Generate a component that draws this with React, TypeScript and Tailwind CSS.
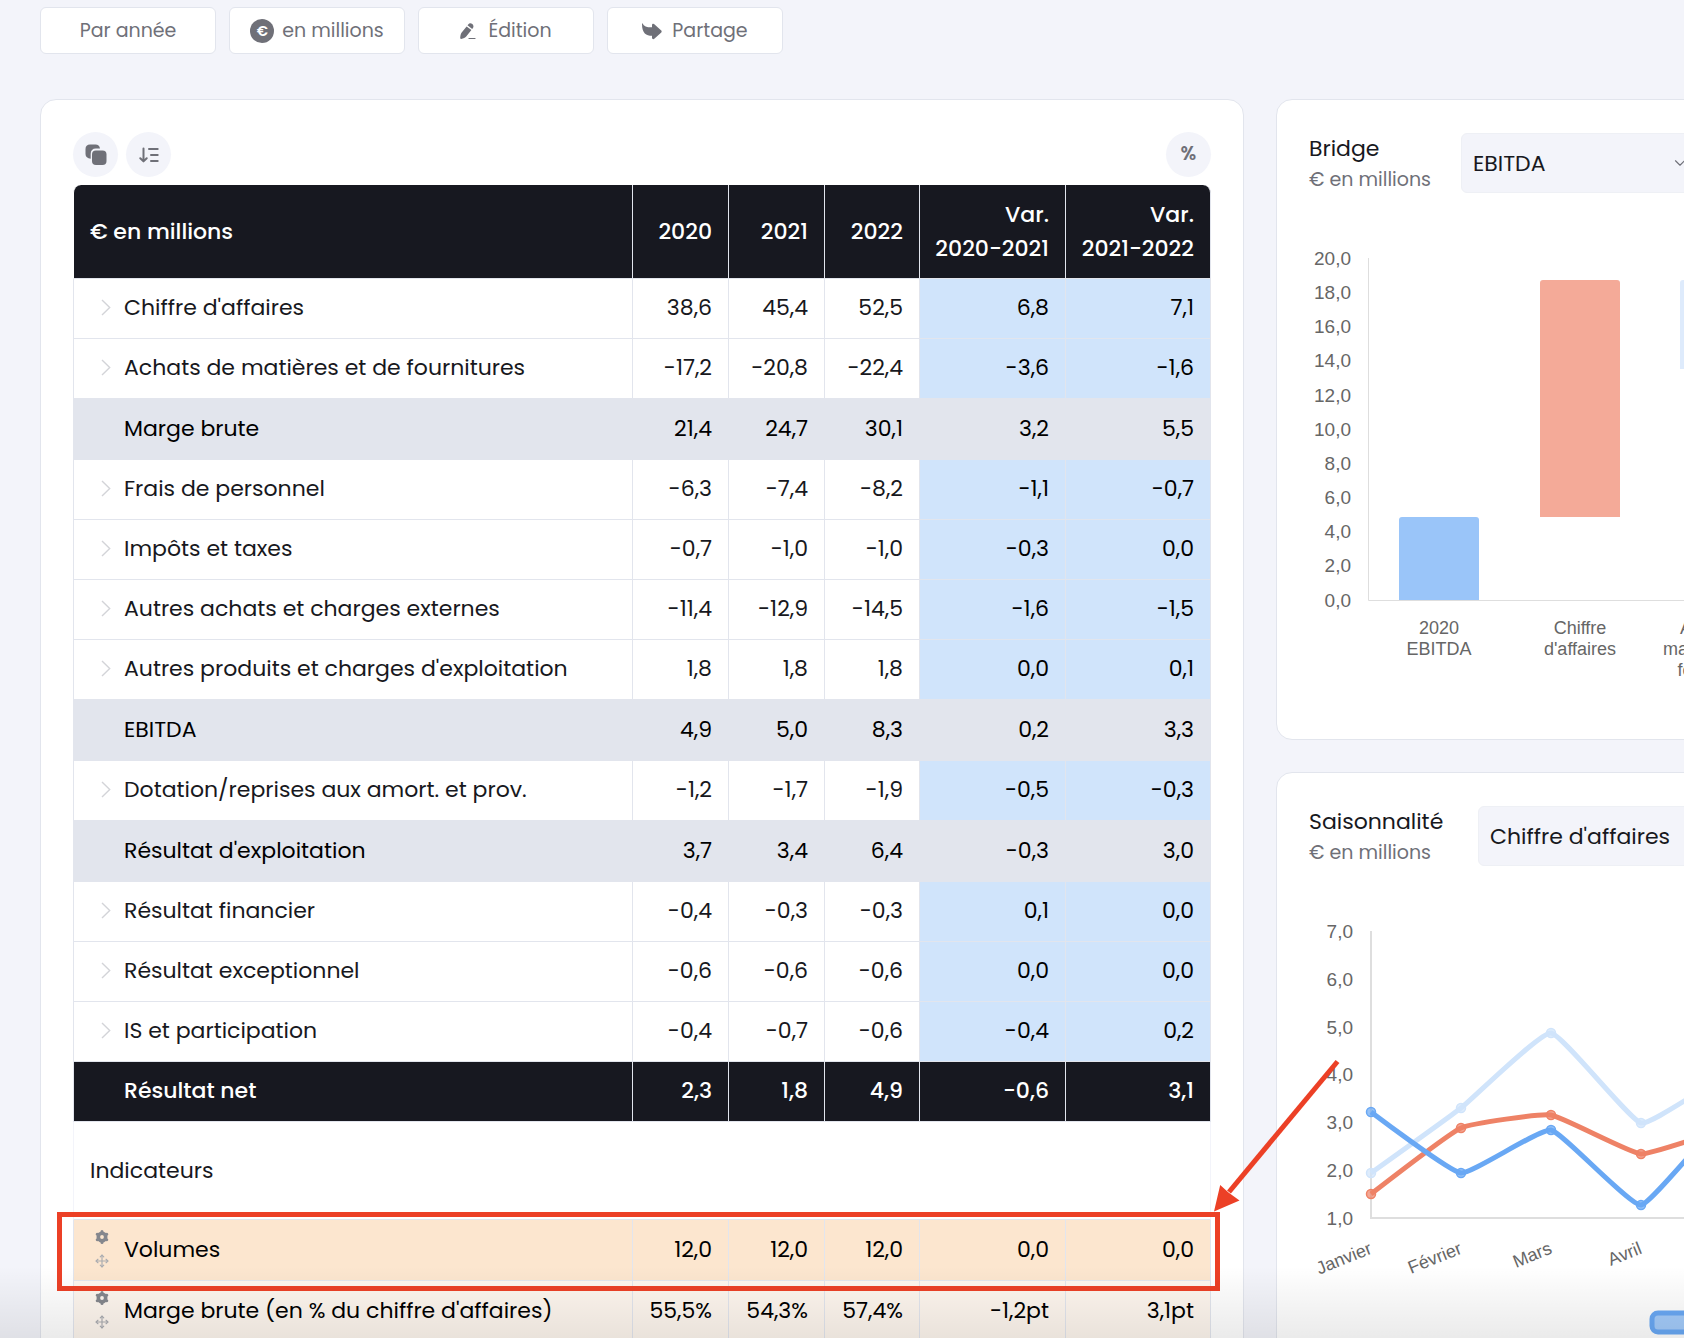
import { ChevronDown, Move } from "lucide-react";
import clsx from "clsx";

type RowKind = "line" | "subtotal" | "total" | "indicator";

interface Row {
  label: string;
  values: string[];
  kind: RowKind;
  highlighted?: boolean;
}

const columns = ["2020", "2021", "2022", "Var. 2020-2021", "Var. 2021-2022"];

const rows: Row[] = [
  { kind: "line", label: "Chiffre d'affaires", values: ["38,6", "45,4", "52,5", "6,8", "7,1"] },
  { kind: "line", label: "Achats de matières et de fournitures", values: ["-17,2", "-20,8", "-22,4", "-3,6", "-1,6"] },
  { kind: "subtotal", label: "Marge brute", values: ["21,4", "24,7", "30,1", "3,2", "5,5"] },
  { kind: "line", label: "Frais de personnel", values: ["-6,3", "-7,4", "-8,2", "-1,1", "-0,7"] },
  { kind: "line", label: "Impôts et taxes", values: ["-0,7", "-1,0", "-1,0", "-0,3", "0,0"] },
  { kind: "line", label: "Autres achats et charges externes", values: ["-11,4", "-12,9", "-14,5", "-1,6", "-1,5"] },
  { kind: "line", label: "Autres produits et charges d'exploitation", values: ["1,8", "1,8", "1,8", "0,0", "0,1"] },
  { kind: "subtotal", label: "EBITDA", values: ["4,9", "5,0", "8,3", "0,2", "3,3"] },
  { kind: "line", label: "Dotation/reprises aux amort. et prov.", values: ["-1,2", "-1,7", "-1,9", "-0,5", "-0,3"] },
  { kind: "subtotal", label: "Résultat d'exploitation", values: ["3,7", "3,4", "6,4", "-0,3", "3,0"] },
  { kind: "line", label: "Résultat financier", values: ["-0,4", "-0,3", "-0,3", "0,1", "0,0"] },
  { kind: "line", label: "Résultat exceptionnel", values: ["-0,6", "-0,6", "-0,6", "0,0", "0,0"] },
  { kind: "line", label: "IS et participation", values: ["-0,4", "-0,7", "-0,6", "-0,4", "0,2"] },
  { kind: "total", label: "Résultat net", values: ["2,3", "1,8", "4,9", "-0,6", "3,1"] },
];

const indicators: Row[] = [
  { kind: "indicator", label: "Volumes", values: ["12,0", "12,0", "12,0", "0,0", "0,0"], highlighted: true },
  { kind: "indicator", label: "Marge brute (en % du chiffre d'affaires)", values: ["55,5%", "54,3%", "57,4%", "-1,2pt", "3,1pt"] },
];

/* Icons */

function PencilIcon() {
  return (
    <svg width="16" height="17" viewBox="0 0 16 17" fill="currentColor" aria-hidden="true">
      <path d="M6.6 3.4 11.4 7.1 6.2 13.6C5.4 14.6 3.4 15.8 1.2 16 .6 16 .2 15.7.2 15.1.3 12.9.7 10.8 1.5 9.8Z" />
      <path d="M7.5 2.3 8.2 1.4C9.4-.1 11.1.1 12.3 1.1 13.5 2 13.9 3.7 12.9 5.1L12.2 6Z" />
      <path d="M9 15.500H15" stroke="currentColor" strokeWidth="1.200" strokeLinecap="round" />
    </svg>
  );
}

function ShareIcon() {
  return (
    <svg width="20" height="17" viewBox="0 0 20 17" fill="currentColor" aria-hidden="true">
      <path d="M.6.4C1.8 3.3 4.8 4.4 10 4.3V2.3C10 .8 11.5.4 12.6 1.4L19 7.3C19.9 8.1 19.9 9 19 9.8L12.6 15.6C11.5 16.6 10 16.2 10 14.7V12.8C4.200 12.800 0 10.200 0 .9 0 .2.400 0 .6.4Z" />
    </svg>
  );
}

function CopyIcon() {
  return (
    <svg width="22" height="22" viewBox="0 0 22 22" fill="currentColor" aria-hidden="true">
      <path d="M5 .5H10.500C13 .5 14.700 2 15 4.600H11C7.500 4.600 5.700 6.500 5.700 10V14.700C2.500 14.500.5 12.800.5 10V5C.5 2.200 2.200.5 5 .5Z" />
      <rect x="7" y="6.500" width="14.500" height="14.500" rx="4" />
    </svg>
  );
}

function SortIcon() {
  return (
    <svg width="20" height="16" viewBox="0 0 20 16" fill="none" stroke="currentColor" strokeWidth="2" strokeLinecap="round" strokeLinejoin="round" aria-hidden="true">
      <path d="M4.500 1.500V14M1.300 11.200 4.500 14.400 7.700 11.200M10 2H18.700M12 8H18.700M12 14H18.700" />
    </svg>
  );
}

function ExpandIcon() {
  return (
    <svg width="10" height="17" viewBox="0 0 10 17" fill="none" stroke="currentColor" strokeWidth="1.400" aria-hidden="true">
      <path d="M1 1 8.700 8.500 1 16" />
    </svg>
  );
}

function GearIcon() {
  return (
    <svg width="14" height="14" viewBox="0 0 14 14" fill="none" stroke="currentColor" aria-hidden="true">
      <circle cx="7" cy="7" r="3.700" strokeWidth="3.600" />
      {[0, 60, 120].map((angle) => (
        <path key={angle} d="M7 1.500V2.500M7 11.500V12.500" strokeWidth="3" strokeLinecap="round" transform={`rotate(${angle} 7 7)`} />
      ))}
    </svg>
  );
}

/* Income statement */

function ToolbarButton({ children }: { children: React.ReactNode }) {
  return (
    <button
      type="button"
      className="flex h-[47px] w-[176px] items-center justify-center gap-2 rounded-md border border-[#e2e5ed] bg-white pt-px text-[19px] text-[#6f7078]"
    >
      {children}
    </button>
  );
}

function RoundButton({ label, children }: { label: string; children: React.ReactNode }) {
  return (
    <button
      type="button"
      aria-label={label}
      className="flex size-[45px] items-center justify-center rounded-full bg-[#f3f4fa] text-[19px] font-semibold text-[#6f7078]"
    >
      {children}
    </button>
  );
}

/* Frame and arrow drawn around a row */
function Callout() {
  return (
    <>
      <span className="pointer-events-none absolute -top-2 -right-[9px] -bottom-[10px] -left-4 border-[5px] border-[#ec4026]" />
      <svg
        className="pointer-events-none absolute bottom-full left-full mb-2"
        width="130"
        height="154"
        viewBox="0 0 130 154"
        aria-hidden="true"
      >
        <path d="M126.500 3.500 18 134" stroke="#ec4026" strokeWidth="5" />
        <path d="M3 153.500 9.200 127 17.500 134.500 28.500 142.500Z" fill="#ec4026" />
      </svg>
    </>
  );
}

function StatementRow({ row }: { row: Row }) {
  const { kind, label, values, highlighted } = row;
  return (
    <tr
      className={clsx(
        kind === "line" && "h-[60px] text-[#171820]",
        kind === "subtotal" && "h-[61px] bg-[#e2e5ed] text-black",
        kind === "total" && "h-[60px] bg-[#171820] text-white",
        kind === "indicator" && "h-[61px] text-black",
        kind === "indicator" && (highlighted ? "relative z-10 bg-[#fce6cf]" : "bg-[#fef6ee]"),
      )}
    >
      <th
        scope="row"
        className={clsx(
          "border-x border-b border-[#e2e5ed] pb-0.5 text-left",
          kind === "total" ? "font-medium" : "font-normal",
        )}
      >
        <div className="flex items-center">
          <div className="flex w-[50px] shrink-0 items-center pl-[21px]">
            {kind === "line" && (
              <button type="button" aria-label={`Déplier ${label}`} className="pl-1.5 text-[#d3d4d8]">
                <ExpandIcon />
              </button>
            )}
            {kind === "indicator" && (
              <div className="flex flex-col gap-[10px]">
                <button type="button" aria-label={`Paramètres ${label}`} className="text-[#85878d]">
                  <GearIcon />
                </button>
                <button type="button" aria-label={`Déplacer ${label}`} className="text-[#a9abb0]">
                  <Move size={14} strokeWidth={2} />
                </button>
              </div>
            )}
          </div>
          <span className="whitespace-nowrap">{label}</span>
        </div>
        {highlighted && <Callout />}
      </th>
      {values.map((value, i) => (
        <td
          key={columns[i]}
          className={clsx(
            "border-r border-b border-[#e2e5ed] pr-4 pb-0.5 text-right whitespace-nowrap",
            kind === "total" && "font-medium",
            kind === "line" && i > 2 && "bg-[#d0e4fb] text-black",
          )}
        >
          {value}
        </td>
      ))}
    </tr>
  );
}

function StatementTable() {
  return (
    <table className="mt-2 w-full table-fixed border-separate border-spacing-0 text-[22px]">
      <colgroup>
        <col />
        <col className="w-[96px]" />
        <col className="w-[96px]" />
        <col className="w-[95px]" />
        <col className="w-[146px]" />
        <col className="w-[145px]" />
      </colgroup>
      <thead>
        <tr className="h-[94px] leading-[34px] text-white">
          <th scope="col" className="rounded-tl-lg border-x border-b border-[#e2e5ed] border-l-white bg-[#171820] pl-4 text-left font-medium">
            € en millions
          </th>
          {columns.map((column) => (
            <th
              key={column}
              scope="col"
              className="border-r border-b border-[#e2e5ed] bg-[#171820] pr-4 text-right font-medium last:rounded-tr-lg"
            >
              {column.split(" ").map((part) => (
                <span key={part} className="block whitespace-nowrap">{part}</span>
              ))}
            </th>
          ))}
        </tr>
      </thead>
      <tbody>
        {rows.map((row) => (
          <StatementRow key={row.label} row={row} />
        ))}
        <tr className="h-[98px] text-[#171820]">
          <th scope="rowgroup" colSpan={6} className="border-x border-b border-[#f3f4fa] border-b-[#e2e5ed] pl-4 text-left font-normal">
            Indicateurs
          </th>
        </tr>
        {indicators.map((row) => (
          <StatementRow key={row.label} row={row} />
        ))}
      </tbody>
    </table>
  );
}

/* Charts */

interface ChartCardProps {
  id: string;
  title: string;
  option: string;
  titleClass: string;
  selectClass: string;
  children: React.ReactNode;
}

function ChartCard({ id, title, option, titleClass, selectClass, children }: ChartCardProps) {
  return (
    <section className="rounded-2xl border border-[#e2e5ed] bg-white p-8">
      <div className="flex items-center">
        <div className={clsx("shrink-0 whitespace-nowrap", titleClass)}>
          <h2 className="text-[22px] leading-[34px] text-[#171820]">{title}</h2>
          <p className="text-[19px] leading-[28px] text-[#6f7078]">€ en millions</p>
        </div>
        <div className={clsx("relative shrink-0", selectClass)}>
          <select
            id={id}
            aria-label={title}
            className="h-[60px] w-full appearance-none rounded-md border border-[#eef0f5] bg-[#f3f4fa] pl-[11px] text-[22px] text-[#171820]"
          >
            <option>{option}</option>
          </select>
          <ChevronDown size={18} strokeWidth={1.5} className="pointer-events-none absolute top-[21px] right-3 text-[#6f7078]" />
        </div>
      </div>
      {children}
    </section>
  );
}

const bars = [
  { x: 90, y: 292, height: 83, color: "#9ac5f9", label: ["2020", "EBITDA"] },
  { x: 231, y: 55, height: 237, color: "#f4aa98", label: ["Chiffre", "d'affaires"] },
  { x: 371, y: 55, height: 89, color: "#deebfc", label: ["Achats de", "matières et de", "fournitures"] },
];

const chartClass = "block font-['Liberation_Sans',Arial,sans-serif]";

function BridgeChart() {
  const ticks = Array.from({ length: 11 }, (_, i) => 20 - i * 2);
  return (
    <svg className={clsx("mt-[31px]", chartClass)} width="680" height="482" viewBox="0 0 680 482" fill="#666" role="img" aria-label="Bridge EBITDA">
      {ticks.map((tick, i) => (
        <text key={tick} x="42" y={40 + i * 34.15} textAnchor="end" fontSize="19">
          {tick},0
        </text>
      ))}
      <path d="M59.500 33V375.500H680" fill="none" stroke="#dedede" />
      {bars.map((bar) => (
        <g key={bar.x}>
          <path
            d={`M${bar.x} ${bar.y + bar.height}v${-(bar.height - 3)}q0-3 3-3h74q3 0 3 3v${bar.height - 3}z`}
            fill={bar.color}
          />
          {bar.label.map((line, i) => (
            <text key={line} x={bar.x + 40} y={409 + i * 21} textAnchor="middle" fontSize="18">
              {line}
            </text>
          ))}
        </g>
      ))}
    </svg>
  );
}

const months = ["Janvier", "Février", "Mars", "Avril"];
const monthX = [62, 152, 242, 332, 422];

const series = [
  { color: "#d0e4fb", points: [276, 211, 136, 226, 178] },
  { color: "#ee8266", points: [297, 231, 218, 257, 232] },
  { color: "#69a8f4", points: [215, 276, 233, 308, 218] },
];

function curve(ys: number[]) {
  const tension = 0.06;
  const slope = (i: number) => {
    if (i === 0 || i === ys.length - 1) return 0;
    return (ys[i + 1] - ys[i - 1]) * tension;
  };
  const dx = 180 * tension;
  return ys.reduce((path, y, i) => {
    if (i === 0) return `M${monthX[0]} ${y}`;
    // The first point has no handle of its own
    const x1 = i === 1 ? monthX[0] : monthX[i - 1] + dx;
    return `${path}C${x1} ${ys[i - 1] + slope(i - 1)} ${monthX[i] - dx} ${y - slope(i)} ${monthX[i]} ${y}`;
  }, "");
}

function SeasonalityChart() {
  return (
    <svg className={clsx("mt-[30px]", chartClass)} width="680" height="482" viewBox="0 0 680 482" fill="#666" role="img" aria-label="Saisonnalité du chiffre d'affaires">
      {[7, 6, 5, 4, 3, 2, 1].map((tick, i) => (
        <text key={tick} x="44" y={41 + i * 47.8} textAnchor="end" fontSize="19">
          {tick},0
        </text>
      ))}
      <path d="M62 34V321H680" fill="none" stroke="#dedede" strokeWidth="2" />
      {series.map(({ color, points }) => (
        <g key={color} stroke={color}>
          <path d={curve(points)} fill="none" strokeWidth="5" />
          {points.map((y, i) => (
            <circle key={i} cx={monthX[i]} cy={y} r="4.500" strokeWidth="1.500" fill={color} fillOpacity="0.700" />
          ))}
        </g>
      ))}
      {months.map((month, i) => (
        <text key={month} textAnchor="end" fontSize="18" transform={`translate(${monthX[i] + 2} 356) rotate(-22)`}>
          {month}
        </text>
      ))}
      <rect x="343" y="416" width="56" height="19" rx="6" fill="#a3cbfa" stroke="#69a8f4" strokeWidth="5" />
    </svg>
  );
}

export default function App() {
  return (
    <div className="relative h-screen overflow-hidden bg-[#f3f4fa] font-['Poppins','Inter',sans-serif]">
      <main className="pt-[7px] pl-10">
        <div className="flex gap-[13px]">
          <ToolbarButton>Par année</ToolbarButton>
          <ToolbarButton>
            <span className="flex size-6 items-center justify-center rounded-full bg-[#6f7078] text-sm font-semibold text-white">€</span>
            en millions
          </ToolbarButton>
          <ToolbarButton>
            <PencilIcon />
            <span className="pl-1">Édition</span>
          </ToolbarButton>
          <ToolbarButton>
            <ShareIcon />
            <span className="pl-0.5">Partage</span>
          </ToolbarButton>
        </div>

        <div className="mt-[45px] grid grid-cols-[minmax(0,1fr)_408px] gap-8">
          <section className="rounded-2xl border border-[#e2e5ed] bg-white p-8">
            <div className="flex gap-2">
              <RoundButton label="Copier">
                <CopyIcon />
              </RoundButton>
              <RoundButton label="Trier">
                <SortIcon />
              </RoundButton>
              <div className="ml-auto">
                <RoundButton label="Pourcentages">%</RoundButton>
              </div>
            </div>
            <StatementTable />
          </section>

          {/* Wider than its column, runs off the right edge */}
          <div className="flex w-[748px] flex-col gap-8">
            <ChartCard id="bridge" title="Bridge" option="EBITDA" titleClass="w-[152px]" selectClass="w-[240px]">
              <BridgeChart />
            </ChartCard>
            <ChartCard id="season" title="Saisonnalité" option="Chiffre d'affaires" titleClass="w-[169px]" selectClass="w-[260px]">
              <SeasonalityChart />
            </ChartCard>
          </div>
        </div>
      </main>
      <div className="pointer-events-none absolute inset-x-0 bottom-0 z-20 h-[72px] bg-linear-to-b from-transparent to-black/8" />
    </div>
  );
}
